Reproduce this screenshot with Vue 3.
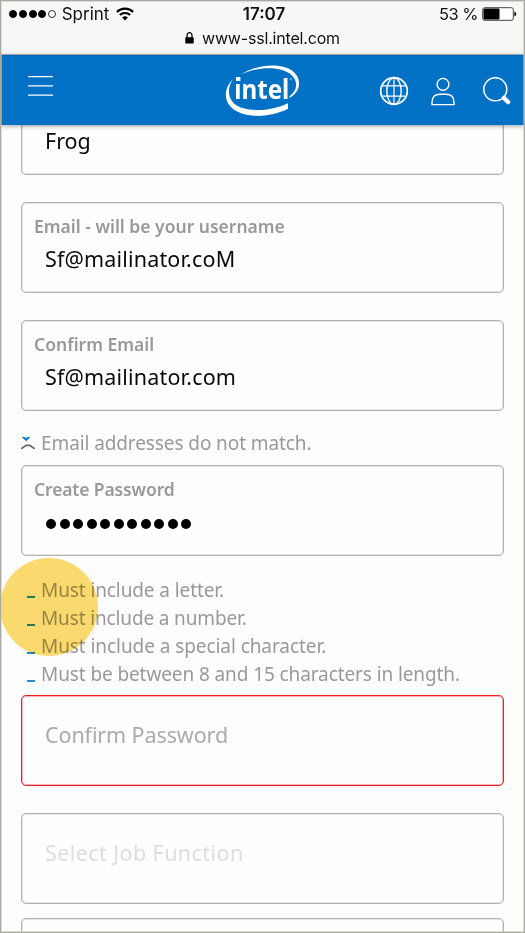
<script setup>
const signal = [1, 1, 1, 1, 0]
const hints = [
  { text: 'Must include a letter.', cls: 'h1' },
  { text: 'Must include a number.', cls: 'h2' },
  { text: 'Must include a special character.', cls: 'h3' },
  { text: 'Must be between 8 and 15 characters in length.', cls: 'h4' },
]
const passwordDots = 11
</script>

<template>
  <div class="screen">
    <header class="status">
      <div class="status-row">
        <div class="carrier">
          <span class="signal">
            <i v-for="(on, i) in signal" :key="i" :class="{ on }"></i>
          </span>
          <span class="t-carrier">Sprint</span>
          <svg class="wifi" width="18" height="14" viewBox="0 0 17 13" fill="none" stroke="#000" stroke-width="2">
            <path d="M.8 4.6a11 11 0 0 1 15.4 0" />
            <path d="M3.6 7.5a7 7 0 0 1 9.8 0" />
            <path d="M8.5 12.7 5.8 9.8a4 4 0 0 1 5.4 0z" fill="#000" stroke="none" />
          </svg>
        </div>
        <span class="clock">17:07</span>
        <div class="power">
          <span class="t-power">53 %</span>
          <svg class="battery" width="35" height="14" viewBox="0 0 35 14">
            <rect x=".7" y=".7" width="30.6" height="12.6" rx="2" fill="#fff" stroke="#444" />
            <rect x="1.5" y="1.5" width="16" height="11" rx="1" fill="#000" />
            <path d="M32.3 4.6q2 .6 2 2.4t-2 2.4z" fill="#111" />
          </svg>
        </div>
      </div>
      <div class="address">
        <svg width="9" height="12" viewBox="0 0 9 12">
          <path d="M2 6V3.2a2.5 2.5 0 0 1 5 0V6" fill="none" stroke="#000" stroke-width="1.2" />
          <rect x=".3" y="5.2" width="8.4" height="6.4" rx=".7" />
        </svg>
        <span class="t-url">www-ssl.intel.com</span>
      </div>
    </header>

    <nav class="bar">
      <svg class="burger" width="25" height="21" viewBox="0 0 25 21" stroke="#fff" stroke-width="1.3">
        <path d="M0 .700h25M0 9.800h25M0 19.200h25" />
      </svg>
      <svg class="logo" width="78" height="54" viewBox="0 0 78 54">
        <path d="M17.500 10.200C32 .8 56 -1.800 68 6.600C78.500 14.500 77 28 65.500 34V32.200C74 26.500 74.500 16 66 9.700C54 1.500 33 3.200 17.500 10.200Z" fill="#fff" />
        <path d="M8.800 15.300C1 23 -.5 33.500 5.500 41.500C16 54.500 44 55 64 44.800V39.200C47 47.500 21 49 10 39.500C3.500 33.500 3.500 23.500 8.800 15.300Z" fill="#fff" />
        <rect x="12" y="13" width="4.400" height="4" fill="#fff" />
        <text x="10.300" y="35" class="logo-text" textLength="55" lengthAdjust="spacingAndGlyphs">ıntel</text>
        <circle cx="67" cy="15" r=".7" fill="#fff" />
      </svg>
      <div class="tools">
        <svg width="30" height="30" viewBox="0 0 30 30" fill="none" stroke="#fff" stroke-width="1.400">
          <circle cx="15" cy="15" r="13.300" stroke-width="1.700" />
          <ellipse cx="15" cy="15" rx="7.200" ry="13.300" />
          <path d="M15 1.700v26.600M3.500 9.800h23M3.500 20.200h23" stroke-width="1.200" />
        </svg>
        <svg class="person" width="24" height="30" viewBox="0 0 24 30" fill="none" stroke="#fff" stroke-width="1.400">
          <circle cx="12" cy="8.300" r="5.900" />
          <path d="M1 28.600v-2.300q0-8 8-8h6q8 0 8 8v2.300z" />
        </svg>
        <svg width="30" height="30" viewBox="0 0 30 30" fill="none" stroke="#fff">
          <circle cx="13.300" cy="13.300" r="11.500" stroke-width="1.500" />
          <path d="m20.500 20.800 2 2" stroke-width="2.500" />
          <path d="m22 22 4 4" stroke-width="4.500" stroke-linecap="round" />
        </svg>
      </div>
    </nav>

    <main class="form">
      <section class="field first"><div class="value v-name"><span>Frog</span></div></section>

      <section class="field">
        <div class="label"><span class="l-email">Email - will be your username</span></div>
        <div class="value"><span class="v-email">Sf@mailinator.coM</span></div>
      </section>

      <section class="field">
        <div class="label"><span class="l-confirm">Confirm Email</span></div>
        <div class="value"><span class="v-confirm">Sf@mailinator.com</span></div>
      </section>

      <div class="error">
        <svg width="14" height="15" viewBox="0 0 14 15">
          <path d="M.6 1h3.200l1.300 1.300L6.400 1h3.200L5.100 5.300z" fill="#1478cc" />
          <path d="M.3 12.800 5 9.400h3.800l4.900 3.400" fill="none" stroke="#666" stroke-width="1.700" />
        </svg>
        <span class="t-error">Email addresses do not match.</span>
      </div>

      <section class="field tight">
        <div class="label"><span class="l-create">Create Password</span></div>
        <div class="dots"><i v-for="n in passwordDots" :key="n"></i></div>
      </section>

      <ul class="hints">
        <li v-for="h in hints" :key="h.cls">
          <i class="dash"></i><span :class="h.cls">{{ h.text }}</span>
        </li>
      </ul>

      <section class="field invalid"><span class="placeholder p-confirm">Confirm Password</span></section>
      <section class="field"><span class="placeholder p-job">Select Job Function</span></section>
      <section class="field last"></section>
    </main>

    <div class="touch"></div>
    <div class="frame"></div>
  </div>
</template>

<style>
body { margin: 0; overflow: hidden; }
</style>

<style scoped>
* { box-sizing: border-box; }
.screen {
  position: relative;
  width: 525px;
  height: 933px;
  overflow: hidden;
  display: flex;
  flex-direction: column;
  background: #fdfdfd;
  font-family: "Noto Sans", sans-serif;
  white-space: nowrap;
}
svg { display: block; flex: none; }
.status {
  flex: none;
  height: 55px;
  background: #f7f7f7;
  border-bottom: 1px solid #b4b8bc;
  font-family: Inter, sans-serif;
  font-size: 17px;
  color: #111;
}
.status-row {
  display: grid;
  grid-template-columns: 1fr auto 1fr;
  align-items: center;
  height: 28px;
  padding: 0 8px 0 9px;
}
.carrier { display: flex; align-items: center; }
.signal { display: flex; gap: 1.800px; margin-right: 5.500px; }
.signal i { width: 8px; height: 8px; border-radius: 50%; border: 1px solid #333; }
.signal i.on { background: #000; border-color: #000; }
.wifi { margin-left: 7px; }
.clock { font-weight: 600; padding-left: 2px; }
.power { display: flex; align-items: center; justify-content: flex-end; gap: 4px; }
.t-power { font-size: 16.500px; letter-spacing: -.5px; }
.address {
  display: flex;
  align-items: center;
  justify-content: center;
  gap: 8px;
  height: 20px;
  font-size: 16px;
}
.t-url { letter-spacing: -.18px; }
.bar {
  flex: none;
  position: relative;
  z-index: 1;
  display: flex;
  height: 70px;
  background: #0071c5;
  border-top: 1px solid #0067b5;
  box-shadow: 0 1px 5px rgba(0, 0, 0, .35);
}
.burger { margin: 20px 0 0 28px; }
.logo { margin: 8px 0 0 171px; }
.logo-text { font: 700 27px "Noto Sans", sans-serif; fill: #fff; }
.tools { display: flex; margin: 20px 0 0 77px; }
.person { margin: 0 27px 0 22px; }
.form { padding: 0 21px; }
.field {
  height: 91px;
  margin: 0 0 27px;
  width: 483px;
  border: 1px solid #b2b2b2;
  box-shadow: inset 0 0 0 1px #e4e4e4;
  border-radius: 5px;
  background: #fefefe;
  padding: 12px 12px 0;
}
.field.first { height: 50px; border-top: 0; border-radius: 0 0 5px 5px; padding-top: 0; }
.label { height: 23px; line-height: 22px; font-size: 17.500px; font-weight: 600; color: #999; }
.value { height: 36px; line-height: 41px; padding-left: 11px; font-size: 21.500px; color: #0a0a0a; }
.value.v-name { line-height: 31px; }
.v-email { letter-spacing: .17px; }
.v-confirm { letter-spacing: .18px; }
.l-create { letter-spacing: -.13px; }
.t-error { letter-spacing: -.1px; }
.error {
  display: flex;
  align-items: center;
  gap: 6px;
  height: 28px;
  margin: -9px 0 8px;
  font-size: 19px;
  color: #999;
}
.field.tight { margin-bottom: 0; }
.dots { display: flex; gap: 3.500px; padding: 18px 0 0 12px; }
.dots i { width: 10px; height: 10px; border-radius: 50%; background: #000; }
.hints { list-style: none; margin: 0; padding: 20px 0 7px 6px; }
.hints li { display: flex; height: 28px; line-height: 28px; font-size: 19px; color: #999; }
.dash { width: 8px; height: 2px; margin: 20px 6px 0 0; background: #268bd6; }
.h1, .h4 { letter-spacing: -.1px; }
.h2 { letter-spacing: -.14px; }
.h3 { letter-spacing: -.07px; }
.field.invalid { border-color: #ee2028; box-shadow: inset 0 0 0 1px #fbb4b7; }
.placeholder { display: block; padding: 12px 0 0 11px; line-height: 30px; font-size: 21.500px; color: #aaa; }
.p-confirm { letter-spacing: -.1px; }
.p-job { color: #ddd; letter-spacing: .42px; }
.field.last { margin-top: -13px; margin-bottom: 0; }
.touch {
  position: absolute;
  z-index: 2;
  left: 0;
  top: 558px;
  width: 98px;
  height: 98px;
  border-radius: 50%;
  background: #fcdc6f;
  mix-blend-mode: multiply;
}
.frame { position: absolute; z-index: 3; inset: 0; border: 1px solid #aaab9e; box-shadow: inset 0 0 0 1px rgba(200, 200, 190, .6); }
</style>
